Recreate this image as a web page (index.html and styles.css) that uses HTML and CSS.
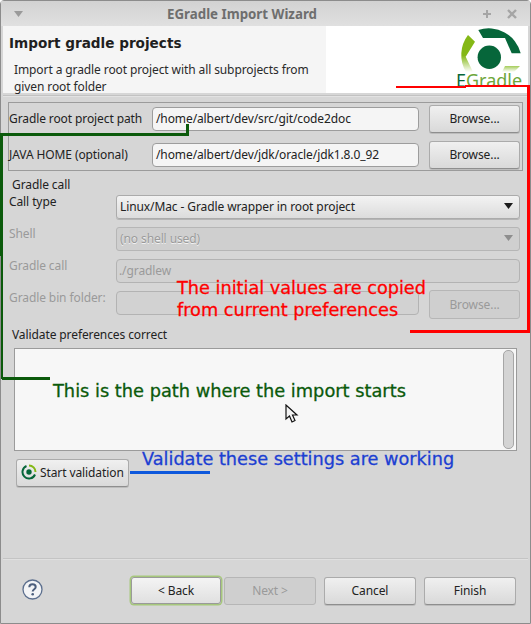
FILE: index.html

```html
<!DOCTYPE html>
<html>
<head>
  <meta charset="utf-8">
  <title>EGradle Import Wizard</title>
  <link rel="stylesheet" href="styles.css">
</head>
<body>

<div class="window">
  <div class="titlebar">
    <svg class="menu-arrow" width="10" height="6" viewBox="0 0 10 6"><path d="M0 0H9L4.500 6Z" fill="#9a9a9a"/></svg>
    <div class="title">EGradle Import Wizard</div>
    <svg class="win-btn" width="12" height="12" viewBox="0 0 12 12"><path d="M6 2V10M2 6H10" stroke="#a5a5a5" stroke-width="2"/></svg>
    <svg class="win-btn win-close" width="12" height="12" viewBox="0 0 12 12"><path d="M2 2L10 10M10 2L2 10" stroke="#a5a5a5" stroke-width="2.400"/></svg>
  </div>

  <div class="banner">
    <div class="banner-text">
      <div class="banner-title">Import gradle projects</div>
      <div class="banner-desc">Import a gradle root project with all subprojects from given root folder</div>
    </div>
    <div class="banner-logo">
      <svg width="70" height="46" viewBox="452 26 70 46">
        <defs>
          <linearGradient id="fade" x1="0" y1="0" x2="0" y2="1">
            <stop offset="0.55" stop-color="#84b816"/>
            <stop offset="1" stop-color="#ffffff"/>
          </linearGradient>
          <linearGradient id="fade2" x1="0" y1="0" x2="0" y2="1">
            <stop offset="0" stop-color="#a5cc5a"/>
            <stop offset="1" stop-color="#ffffff"/>
          </linearGradient>
        </defs>
        <path d="M478.300 30A33 33 0 0 1 520.700 53.300L511.700 53.300L505 38L483 38Z" fill="#06663a"/>
        <path d="M468 35L475 41.700L465.700 56.700L473 72L466 72A33 33 0 0 1 468 35Z" fill="url(#fade)"/>
        <path d="M505 66L520 66L514 72L502 72Z" fill="url(#fade2)"/>
        <circle cx="489.300" cy="57.300" r="11.700" fill="#06663a"/>
      </svg>
      <div class="logo-name"><span class="logo-e">E</span>Gradle</div>
    </div>
  </div>
  <div class="rule"></div>

  <div class="paths">
    <div class="label">Gradle root project path</div>
    <div class="field">/home/albert/dev/src/git/code2doc</div>
    <div class="btn">Browse...</div>
    <div class="label">JAVA HOME (optional)</div>
    <div class="field">/home/albert/dev/jdk/oracle/jdk1.8.0_92</div>
    <div class="btn">Browse...</div>
  </div>

  <div class="call-head">Gradle call</div>
  <div class="call">
    <div class="label">Call type</div>
    <div class="combo">
      <span>Linux/Mac - Gradle wrapper in root project</span>
      <svg width="10" height="6" viewBox="0 0 10 6"><path d="M0 0H9L4.500 6Z" fill="#1c1c1c"/></svg>
    </div>
    <div class="label off">Shell</div>
    <div class="combo combo-off">
      <span>(no shell used)</span>
      <svg width="10" height="6" viewBox="0 0 10 6"><path d="M0 0H9L4.500 6Z" fill="#8e8e8e"/></svg>
    </div>
    <div class="label off">Gradle call</div>
    <div class="field field-off wide">./gradlew</div>
    <div class="label off">Gradle bin folder:</div>
    <div class="field field-off"></div>
    <div class="btn btn-off btn-tall">Browse...</div>
  </div>

  <div class="validate-head">Validate preferences correct</div>
  <div class="output">
    <div class="scrollbar"></div>
  </div>
  <div class="btn start">
    <svg width="16" height="16" viewBox="0 0 16 16">
      <path d="M8 1.500A6.500 6.500 0 0 1 14.500 8" fill="none" stroke="#84b816" stroke-width="2"/>
      <path d="M14 10.500A6.500 6.500 0 1 1 5.500 2" fill="none" stroke="#06663a" stroke-width="2"/>
      <circle cx="8" cy="8" r="2.700" fill="#06663a"/>
    </svg>
    <span>Start validation</span>
  </div>

  <div class="spring"></div>
  <div class="rule rule-foot"></div>

  <div class="footer">
    <svg class="help" width="21" height="21" viewBox="0 0 21 21">
      <circle cx="10.500" cy="10.500" r="9.500" fill="#f3f4f6" stroke="#5c6f8e" stroke-width="1.300"/>
      <path d="M7.300 8.200C7.300 6.300 8.700 5.300 10.500 5.300C12.400 5.300 13.700 6.400 13.700 8C13.700 10.200 10.700 10.200 10.700 12.600" fill="none" stroke="#4d5f7d" stroke-width="2"/>
      <circle cx="10.700" cy="15.300" r="1.300" fill="#4d5f7d"/>
    </svg>
    <div class="footer-btns">
      <div class="btn btn-focus">&lt; Back</div>
      <div class="btn btn-off btn-next">Next &gt;</div>
      <div class="btn btn-foot">Cancel</div>
      <div class="btn btn-foot">Finish</div>
    </div>
  </div>

  <!-- hand drawn notes on top of the screenshot -->
  <div class="line red" id="red1"></div>
  <div class="line red" id="red2"></div>
  <div class="line red" id="red3"></div>
  <div class="line red" id="red4"></div>
  <div class="note note-red">The initial values are copied<br>from current preferences</div>
  <div class="line green" id="green1"></div>
  <div class="line green" id="green2"></div>
  <div class="line green" id="green3"></div>
  <div class="line green" id="green5"></div>
  <div class="line green" id="green4"></div>
  <div class="note note-green">This is the path where the import starts</div>
  <div class="line blue" id="blue1"></div>
  <div class="note note-blue">Validate these settings are working</div>
  <svg class="cursor" width="14" height="20" viewBox="0 0 14 20">
    <path d="M1 1V15L4.500 12L7 18L10 16.500L7.500 11H12Z" fill="#f4f4f4" stroke="#111" stroke-width="1.200"/>
  </svg>
</div>

</body>
</html>
```

FILE: styles.css

```css
* {
    box-sizing: border-box;
}

body {
    margin: 0;
    font-family: "Noto Sans", sans-serif;
    font-size: 12px;
    letter-spacing: -0.100px;
    color: #222;
}

.window {
    position: relative;
    width: 531px;
    height: 624px;
    display: flex;
    flex-direction: column;
    background: #d6d6d6;
    border: 1px solid #8c8c8c;
    border-radius: 4px 4px 0 0;
}

/* title bar */
.titlebar {
    height: 25px;
    flex: none;
    display: flex;
    align-items: center;
    padding: 0 12px 0 13px;
    background: linear-gradient(#d2d2d2, #e0e0e0);
}
.title {
    flex: 1;
    padding: 0 9px 0 0;
    margin-right: 12px;
    text-align: center;
    font-size: 13.300px;
    font-weight: bold;
    letter-spacing: 0;
    color: #6e6e6e;
}
.win-close {
    margin-left: 13px;
}

/* banner */
.banner {
    height: 67px;
    flex: none;
    margin: 0 2px;
    display: flex;
    background: #fff;
}
.banner-text {
    width: 323px;
    padding: 7px 6px 0 6px;
    background: #f5f5f5;
}
.banner-title {
    font-family: "DejaVu Sans", sans-serif;
    font-size: 13.600px;
    font-weight: bold;
    line-height: 20px;
    letter-spacing: 0;
    color: #1f1f1f;
}
.banner-desc {
    margin: 8px 0 0 5px;
    line-height: 17px;
    color: #2a2a2a;
}
.banner-logo {
    flex: 1;
    overflow: hidden;
    padding: 0 0 0 126px;
}
.banner-logo svg {
    display: block;
}
.logo-name {
    margin-top: -3px;
    padding-left: 4px;
    font-size: 18px;
    line-height: 22px;
    letter-spacing: 0;
    color: #6ea63a;
}
.logo-e {
    color: #06663a;
}

.rule {
    height: 2px;
    flex: none;
    margin: 2px 2px 0;
    background: #c2c2c2;
    border-bottom: 1px solid #e2e2e2;
}

/* path rows */
.paths {
    flex: none;
    margin: 5px 7px 0;
    height: 69px;
    display: grid;
    grid-template-columns: 133px 267px 91px;
    grid-auto-rows: 28px;
    column-gap: 10px;
    row-gap: 8px;
    align-items: center;
    padding-top: 2px;
    border: 1px solid #9b9b9b;
}
.label {
    line-height: 16px;
    white-space: nowrap;
}
.off {
    color: #9a9a9a;
}

.field {
    height: 24px;
    line-height: 22px;
    padding: 0 3px;
    background: #f5f5f5;
    border: 1px solid #9d9d9d;
    border-radius: 4px;
    white-space: nowrap;
}
.field-off {
    padding: 0 2px;
    background: #d2d2d2;
    border-color: #b3b3b3;
    color: #9a9a9a;
}
.wide {
    grid-column: span 2;
}

.btn {
    display: flex;
    align-items: center;
    justify-content: center;
    height: 28px;
    padding-bottom: 2px;
    background: linear-gradient(#f0f0f0, #d9d9d9);
    border: 1px solid #ababab;
    border-bottom-color: #8e8e8e;
    border-radius: 3px;
    box-shadow: 0 1px 0 #bcbcbc;
}
.btn-off {
    background: #cfcfcf;
    border-color: #b6b6b6;
    box-shadow: none;
    color: #9a9a9a;
}
.btn-tall {
    height: 29px;
    margin: -1px 0 -4px;
    padding-bottom: 1px;
}

/* gradle call */
.call-head {
    flex: none;
    margin: 5px 0 0 11px;
    line-height: 17px;
}
.call {
    flex: none;
    margin: 2px 9px 0 8px;
    display: grid;
    grid-template-columns: 97px 303px 91px;
    grid-auto-rows: 24px;
    column-gap: 10px;
    row-gap: 8px;
}
.call > .label {
    margin-top: -1px;
}
.combo {
    grid-column: span 2;
    height: 24px;
    display: flex;
    align-items: center;
    justify-content: space-between;
    padding: 0 5px 2px 3px;
    background: linear-gradient(#f3f3f3, #dcdcdc);
    border: 1px solid #ababab;
    border-radius: 3px;
    box-shadow: 0 1px 0 #b5b5b5;
}
.combo-off {
    background: #cfcfcf;
    border-color: #b6b6b6;
    box-shadow: none;
    color: #9a9a9a;
    text-shadow: 0 1px 0 #f2f2f2;
}

/* validation */
.validate-head {
    flex: none;
    margin: 11px 0 0 11px;
    line-height: 17px;
}
.output {
    flex: none;
    position: relative;
    height: 103px;
    margin: 5px 13px 0 13px;
    background: #f7f7f7;
    border: 1px solid #9b9b9b;
}
.scrollbar {
    position: absolute;
    top: 1px;
    right: 2px;
    bottom: 1px;
    width: 11px;
    background: #d4d4d4;
    border: 1px solid #a6a6a6;
    border-radius: 5px;
}
.start {
    flex: none;
    width: 113px;
    margin: 8px 0 0 15px;
    gap: 3px;
    justify-content: flex-start;
    padding-left: 4px;
}
.start svg {
    flex: none;
}

.spring {
    flex: 1;
}

/* footer */
.rule-foot {
    margin: 0 2px;
    background: #c4c4c4;
    border-bottom: 1px solid #e0e0e0;
}
.footer {
    flex: none;
    height: 63px;
    display: flex;
    align-items: flex-start;
    padding: 17px 14px 0 21px;
}
.help {
    margin-top: 2px;
}
.footer-btns {
    margin-left: auto;
    display: flex;
    gap: 8px;
}
.btn-focus {
    width: 90px;
    height: 27px;
    margin: 0 -5px 0 0;
    padding-bottom: 0;
    border-color: #9a9a9a;
    background: linear-gradient(#f4f4f4, #e0e0e0);
    box-shadow: 0 0 0 1.500px #a6c77c;
}
.btn-next {
    width: 92px;
}
.btn-foot {
    width: 92px;
}

/* notes */
.line {
    position: absolute;
}
.red {
    background: #f00;
}
.green {
    background: #0b5a0b;
}
.blue {
    background: #0d58dc;
}
#red1 {
    left: 395px;
    top: 85px;
    width: 70px;
    height: 2px;
}
#red2 {
    left: 464px;
    top: 84px;
    width: 65px;
    height: 2px;
}
#red3 {
    left: 526px;
    top: 84px;
    width: 3px;
    height: 248px;
}
#red4 {
    left: 409px;
    top: 329px;
    width: 120px;
    height: 3px;
}
#green1 {
    left: -1px;
    top: 132px;
    width: 189px;
    height: 3px;
}
#green2 {
    left: 185px;
    top: 123px;
    width: 3px;
    height: 11px;
}
#green3 {
    left: -1px;
    top: 132px;
    width: 3px;
    height: 123px;
}
#green5 {
    left: 0;
    top: 255px;
    width: 2px;
    height: 123px;
}
#green4 {
    left: 1px;
    top: 376px;
    width: 48px;
    height: 3px;
}
#blue1 {
    left: 129px;
    top: 470px;
    width: 80px;
    height: 3px;
}
.note {
    position: absolute;
    font-family: "DejaVu Sans", sans-serif;
    font-size: 17.700px;
    line-height: 22px;
    letter-spacing: 0;
    white-space: nowrap;
    -webkit-text-stroke: 0.300px currentColor;
}
.note-red {
    left: 176px;
    top: 276px;
    color: #f00;
}
.note-green {
    left: 52px;
    top: 379px;
    font-size: 17.800px;
    color: #0b5a0b;
}
.note-blue {
    left: 141px;
    top: 447px;
    color: #1c3fd2;
}
.cursor {
    position: absolute;
    left: 284px;
    top: 403px;
}
```
